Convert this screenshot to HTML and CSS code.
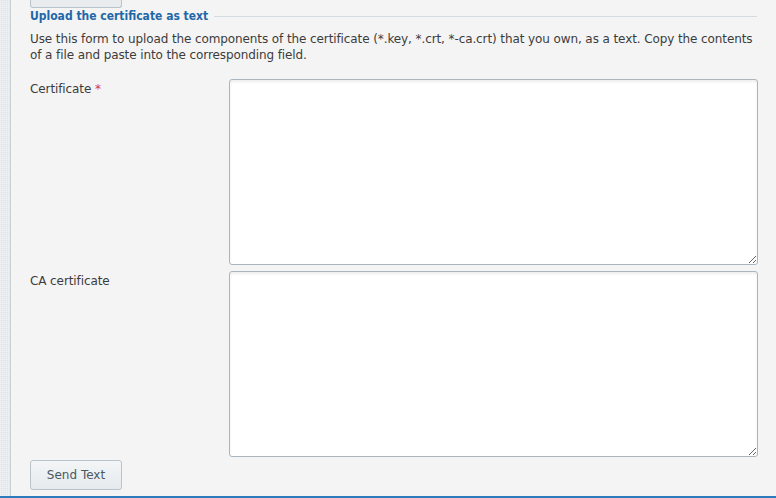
FILE: index.html
```html
<!DOCTYPE html>
<html>
<head>
<meta charset="utf-8">
<link rel="stylesheet" href="styles.css">
</head>
<body>
<div class="page">
  <div class="strip"></div>
  <div class="main">
    <div class="prev-btn"></div>
    <div class="legend-row">
      <span class="legend">Upload the certificate as text</span>
      <span class="legend-line"></span>
    </div>
    <p class="desc">Use this form to upload the components of the certificate (*.key, *.crt, *-ca.crt) that you own, as a text. Copy the contents of a file and paste into the corresponding field.</p>
    <div class="form-row">
      <label class="label">Certificate <span class="req">*</span></label>
      <textarea class="field"></textarea>
    </div>
    <div class="form-row">
      <label class="label">CA certificate</label>
      <textarea class="field"></textarea>
    </div>
    <div class="actions">
      <button class="btn">Send Text</button>
    </div>
  </div>
</div>
</body>
</html>
```

FILE: styles.css
```css
html, body {
  margin: 0;
  padding: 0;
  background: #f4f4f4;
}
body {
  font-family: "DejaVu Sans", "Noto Sans", sans-serif;
  font-size: 12px;
  letter-spacing: -0.1px;
  color: #3c3c3c;
}
.page {
  display: flex;
  height: 496px;
  border-bottom: 2px solid #2b7bbd;
  overflow: hidden;
}
.strip {
  width: 10px;
  flex: none;
  border-right: 1px solid #c9d0d6;
  background-color: #dde3e8;
  background-image:
    repeating-linear-gradient(0deg, rgba(255,255,255,0.35) 0 1px, transparent 1px 2px),
    repeating-linear-gradient(90deg, rgba(255,255,255,0.35) 0 1px, transparent 1px 2px);
}
.main {
  flex: 1;
  padding: 0 18px 0 19px;
  display: flex;
  flex-direction: column;
}
.prev-btn {
  width: 90px;
  height: 7px;
  border: 1px solid #b9c3cb;
  border-top: none;
  border-radius: 0 0 3px 3px;
  background: #e9ecef;
}
.legend-row {
  display: flex;
  align-items: center;
  height: 16px;
  gap: 6px;
}
.legend {
  font-family: "DejaVu Sans Condensed", "DejaVu Sans", sans-serif;
  font-weight: bold;
  letter-spacing: 0;
  color: #1f68a8;
  white-space: nowrap;
}
.legend-line {
  flex: 1;
  border-top: 1px solid #d4dbe1;
  margin-right: 1px;
}
.desc {
  margin: 7px 0 0;
  line-height: 16px;
}
.form-row {
  display: flex;
  margin-top: 16px;
}
.form-row + .form-row {
  margin-top: 6px;
}
.label {
  width: 199px;
  flex: none;
  padding-top: 2px;
  line-height: 16px;
}
.req {
  color: #d0384a;
}
.field {
  flex: 1;
  height: 186px;
  box-sizing: border-box;
  margin: 0;
  border: 1px solid #abb5be;
  border-radius: 3px;
  background: #fff;
  box-shadow: inset 0 2px 3px rgba(0,0,0,0.07);
  resize: vertical;
  font: inherit;
}
.actions {
  margin-top: 3px;
}
.btn {
  width: 92px;
  height: 30px;
  box-sizing: border-box;
  border: 1px solid #b9c3cb;
  border-radius: 3px;
  background: linear-gradient(#f3f5f6, #e6eaed);
  color: #4b5864;
  font: inherit;
  padding: 0 0 1px;
}
```
